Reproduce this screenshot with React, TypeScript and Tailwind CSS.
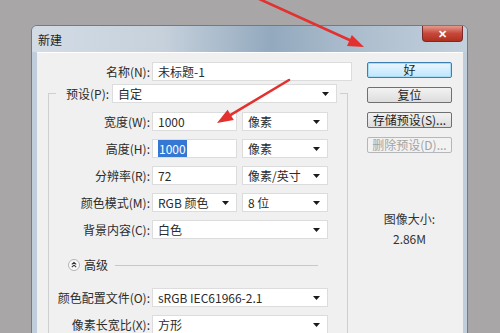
const font = "font-['Noto_Sans_CJK_SC','Liberation_Sans',sans-serif]";

function Caret() {
  return (
    <svg width="7" height="4" viewBox="0 0 7 4" className="flex-none">
      <path d="M0 0h7L3.5 4z" fill="#1a1a1a" />
    </svg>
  );
}

function Field(props: { value: React.ReactNode; w: string; select?: boolean }) {
  return (
    <div className={`${props.w} h-[19px] flex items-center justify-between pl-[5px] pr-[7px] bg-white border border-[#dcdcdc] text-[#2b2b2b]`}>
      <span className="leading-none">{props.value}</span>
      {props.select && <Caret />}
    </div>
  );
}

function Row(props: { label: string; children: React.ReactNode }) {
  return (
    <div className="flex items-center h-[19px]">
      <span className="w-[101px] text-right text-[#2b2b2b] whitespace-nowrap">{props.label}</span>
      <div className="ml-[2px] flex gap-[5px]">{props.children}</div>
    </div>
  );
}

function Btn(props: { label: string; primary?: boolean; disabled?: boolean }) {
  const look = props.primary
    ? "border-[#3c7fb1] bg-[linear-gradient(to_bottom,#eaf6fd,#bee6fd)] text-[#1e1e1e] shadow-[inset_0_0_0_1px_#a6dcf8]"
    : props.disabled
      ? "border-[#b5b8bb] bg-[#f2f2f2] text-[#a3a3a3]"
      : "border-[#707070] bg-[linear-gradient(to_bottom,#f2f2f2,#dddddd)] text-[#1e1e1e]";
  return (
    <div className={`h-[16px] rounded-[2px] border flex items-center justify-center text-[12px] leading-none ${look}`}>
      {props.label}
    </div>
  );
}

export default function App() {
  return (
    <div className={`relative w-[500px] h-[333px] overflow-hidden bg-[#a8a6a7] pt-[25px] pl-[31px] text-[12px] ${font}`}>
      {/* Window */}
      <div className="w-[437px] h-[320px] flex flex-col rounded-t-[6px] border border-[#6f7b88] bg-[#c0cddb] pl-[5px] pr-[4px]">
        {/* Title bar */}
        <div className="h-[26px] -mx-[5px] -mr-[4px] flex justify-between rounded-t-[5px] bg-[linear-gradient(to_right,#d3dce5_0%,#c6d1dc_30%,#93a9be_55%,#a7b9ca_70%,#c4d1dd_100%)]">
          <span className="pl-[6px] pt-[5px] text-[12px] text-[#1f1f1f]">新建</span>
          <div className="mr-[4px] w-[41px] h-[16px] flex items-center justify-center rounded-b-[4px] border border-t-0 border-[#7a2a2a] bg-[linear-gradient(to_bottom,#e39a8c,#c7473a_50%,#b03020)]">
            <span className="text-white text-[11px] font-bold leading-none">✕</span>
          </div>
        </div>

        {/* Content */}
        <div className="flex-1 flex bg-[#f0f0f0] border-t border-white">
          {/* Form */}
          <div className="w-[330px] pt-[9px]">
            <div className="flex items-center h-[19px]">
              <span className="w-[113px] text-right text-[#2b2b2b]">名称(N):</span>
              <div className="ml-[2px]">
                <Field w="w-[200px]" value="未标题-1" />
              </div>
            </div>

            <fieldset className="mt-[3px] ml-[11px] w-[300px] h-[260px] border border-[#cfcfcf]">
              <legend className="ml-[7px] pl-[10px] pr-[3px]">
                <div className="flex items-center h-[19px]">
                  <span className="w-[42px] text-right text-[#2b2b2b] whitespace-nowrap">预设(P):</span>
                  <div className="ml-[4px]">
                    <Field w="w-[225px]" value="自定" select />
                  </div>
                </div>
              </legend>

              <div className="mt-[9px] flex flex-col gap-[8px]">
                <Row label="宽度(W):">
                  <Field w="w-[85px]" value="1000" />
                  <Field w="w-[86px]" value="像素" select />
                </Row>
                <Row label="高度(H):">
                  <Field w="w-[85px]" value={<span className="bg-[#3478d4] text-white px-[1px]">1000</span>} />
                  <Field w="w-[86px]" value="像素" select />
                </Row>
                <Row label="分辨率(R):">
                  <Field w="w-[85px]" value="72" />
                  <Field w="w-[86px]" value="像素/英寸" select />
                </Row>
                <Row label="颜色模式(M):">
                  <Field w="w-[85px]" value="RGB 颜色" select />
                  <Field w="w-[86px]" value="8 位" select />
                </Row>
                <Row label="背景内容(C):">
                  <Field w="w-[176px]" value="白色" select />
                </Row>
              </div>

              {/* Advanced */}
              <div className="mt-[18px] h-[16px] flex items-center pl-[19px] pr-[29px]">
                <svg width="12" height="12" viewBox="0 0 12 12" className="flex-none">
                  <circle cx="6" cy="6" r="5.5" fill="#fafafa" stroke="#b4b4b4" />
                  <path d="M3.8 5.4L6 3.4l2.2 2M3.8 8.2L6 6.2l2.2 2" fill="none" stroke="#333" strokeWidth="1.1" />
                </svg>
                <span className="ml-[4px] text-[#2b2b2b]">高级</span>
                <div className="ml-[7px] flex-1 h-px bg-[#c8c8c8]" />
              </div>

              <div className="mt-[15px] flex flex-col gap-[8px]">
                <Row label="颜色配置文件(O):">
                  <Field w="w-[176px]" value="sRGB IEC61966-2.1" select />
                </Row>
                <Row label="像素长宽比(X):">
                  <Field w="w-[176px]" value="方形" select />
                </Row>
              </div>
            </fieldset>
          </div>

          {/* Buttons */}
          <div className="w-[85px] pt-[9px] flex flex-col">
            <div className="flex flex-col gap-[9px]">
              <Btn label="好" primary />
              <Btn label="复位" />
              <Btn label="存储预设(S)..." />
              <Btn label="删除预设(D)..." disabled />
            </div>
            <div className="mt-[58px] text-center text-[#333] leading-[16px]">图像大小:</div>
            <div className="mt-[4px] text-center text-[#333] leading-[16px]">2.86M</div>
          </div>
        </div>
      </div>

      {/* Red annotation arrows */}
      <svg className="absolute inset-0 pointer-events-none" width="500" height="333" viewBox="0 0 500 333">
        <path d="M257 -2L350.6 40.5" stroke="#e2312f" strokeWidth="2.6" strokeLinecap="round" />
        <polygon points="364,47 347,46 351.8,35" fill="#e2312f" />
        <path d="M289 80L230.7 114.8" stroke="#e2312f" strokeWidth="2.6" strokeLinecap="round" />
        <polygon points="217,123 227.6,109.7 233.8,119.9" fill="#e2312f" />
      </svg>
    </div>
  );
}
